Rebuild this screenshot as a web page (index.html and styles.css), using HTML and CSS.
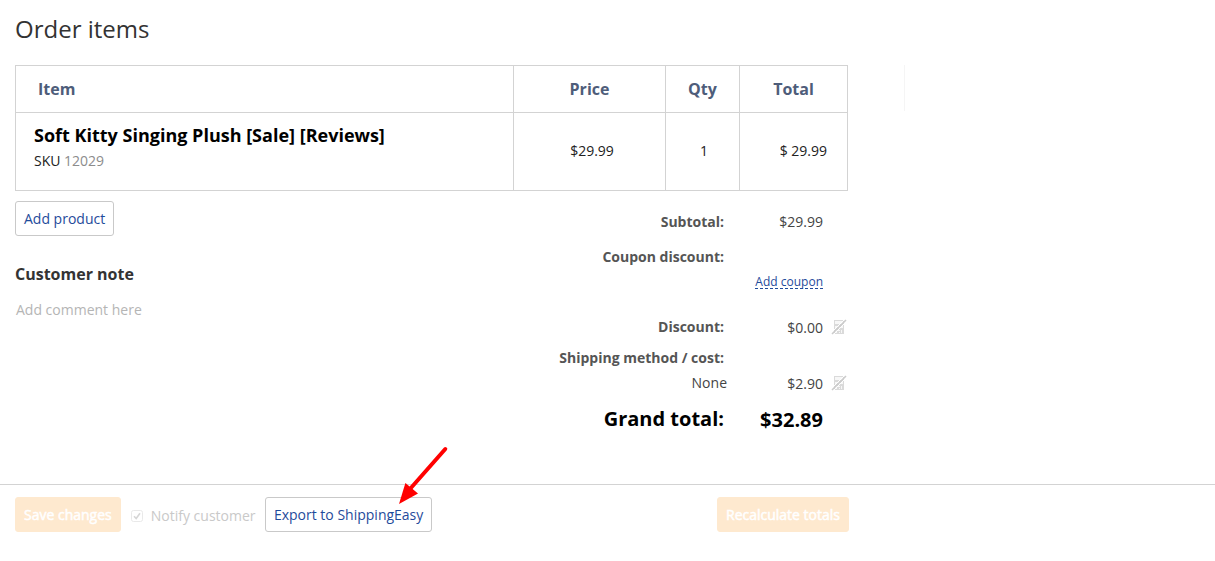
FILE: index.html
```html
<!DOCTYPE html>
<html lang="en">
<head>
<meta charset="utf-8">
<title>Order items</title>
<link rel="stylesheet" href="styles.css">
</head>
<body>
<main class="order">
  <h1 class="title">Order items</h1>
  <div class="items-row">
    <table class="items">
      <colgroup><col class="col-item"><col class="col-price"><col class="col-qty"><col class="col-total"></colgroup>
      <thead>
        <tr><th class="item-head">Item</th><th>Price</th><th>Qty</th><th>Total</th></tr>
      </thead>
      <tbody>
        <tr>
          <td class="item-cell">
            <div class="product">Soft Kitty Singing Plush [Sale] [Reviews]</div>
            <div class="sku">SKU <span class="sku-value">12029</span></div>
          </td>
          <td class="price-cell">$29.99</td>
          <td class="qty-cell">1</td>
          <td class="total-cell">$ 29.99</td>
        </tr>
      </tbody>
    </table>
    <div class="side-edge"></div>
  </div>
  <div class="details">
    <section class="notes">
      <button class="button">Add product</button>
      <h2 class="note-title">Customer note</h2>
      <p class="note-text">Add comment here</p>
    </section>
    <section class="totals">
      <span class="label">Subtotal:</span><span class="value">$29.99</span><span></span>
      <span class="label">Coupon discount:</span><span></span><span></span>
      <span></span><a class="coupon">Add coupon</a><span></span>
      <span class="label">Discount:</span><span class="value low">$0.00</span>
      <svg class="calc" width="16" height="16" viewBox="0 0 16 16"><use href="#calc-off"/></svg>
      <span class="label">Shipping method / cost:</span><span></span><span></span>
      <span class="method">None</span><span class="value low">$2.90</span>
      <svg class="calc" width="16" height="16" viewBox="0 0 16 16"><use href="#calc-off"/></svg>
      <span class="label grand">Grand total:</span><span class="value low grand grand-value">$32.89</span><span></span>
    </section>
  </div>
</main>
<footer class="actions">
  <button class="button primary">Save changes</button>
  <label class="notify">
    <svg class="check" width="12" height="12" viewBox="0 0 12 12"><rect x=".5" y=".5" width="11" height="11" rx="2" fill="#fff" stroke="#e9e9e9"/><path d="M3 6.2 5.2 8.5 9 3.2" fill="none" stroke="#d6d6d6" stroke-width="1.6"/></svg>
    <span>Notify customer</span>
  </label>
  <button class="button export">Export to ShippingEasy</button>
  <button class="button primary recalc">Recalculate totals</button>
</footer>
<svg class="arrow" width="60" height="66" viewBox="0 0 60 66"><path d="M55.3 9 20 49" stroke="#f00" stroke-width="4" stroke-linecap="round"/><path d="M9 64 15.4 43 28 53.5Z" fill="#f00"/></svg>
<svg width="0" height="0" class="defs">
  <symbol id="calc-off" viewBox="0 0 16 16">
    <path d="M3 1h10v14H3z" fill="#dadada"/>
    <path d="M4 2h8v3H4zM4 7h2v2H4zM7 7h2v2H7zM7 11h2v1H7zM10 7h2v2h-2zM10 11h1v3h-1zM4 11h2v3H4zM8 13h1v1H8z" fill="#f7f7f7"/>
    <path d="M0 14 14 0M2 16 16 2" stroke="#fff"/>
    <path d="M1 15 15 1" stroke="#cbcbcb" stroke-width="1.6"/>
  </symbol>
</svg>
</body>
</html>
```

FILE: styles.css
```css
* { box-sizing: border-box; }
body {
  margin: 0;
  height: 561px;
  overflow: hidden;
  background: #fff;
  color: #222;
  font: 14px/20px "Open Sans", sans-serif;
  display: flex;
  flex-direction: column;
}
.order { height: 484px; padding: 0 0 0 15px; }
.title { margin: 0; height: 65px; padding-top: 13px; font-size: 24px; line-height: 32px; font-weight: 400; color: #333; }
.items-row { display: flex; gap: 56px; }
.side-edge { width: 1px; height: 46px; background: #f5f5f5; }
.items { width: 833px; table-layout: fixed; border-collapse: collapse; }
.items th, .items td { border: 1px solid #d3d3d3; padding: 0; }
.col-item { width: 498px; }
.col-price { width: 152px; }
.col-qty { width: 74px; }
.col-total { width: 108px; }
.items th { height: 47px; font-size: 16px; font-weight: 700; color: #4e5d7a; }
.items .item-head { text-align: left; padding-left: 22px; }
.items td { height: 78px; font-size: 14px; padding-bottom: 2px; }
.items .item-cell { vertical-align: top; padding: 11px 0 0 18px; }
.product { font-size: 18px; line-height: 22px; font-weight: 700; color: #000; }
.sku { margin-top: 5px; line-height: 20px; }
.sku-value { color: #8c8c8c; }
.items .price-cell { text-align: center; padding-left: 5px; }
.items .qty-cell { text-align: center; padding-left: 3px; }
.items .total-cell { text-align: right; padding-right: 20px; }
.details { display: flex; justify-content: space-between; width: 833px; }
.notes { padding-top: 10px; }
.button {
  display: block;
  height: 35px;
  padding: 0 8px;
  border: 1px solid #c9c9c9;
  border-radius: 3px;
  background: #fff;
  color: #1f4b9b;
  font: 14px/20px "Open Sans", sans-serif;
  white-space: nowrap;
}
.note-title { margin: 27px 0 0; font-size: 16px; line-height: 22px; font-weight: 700; color: #333; }
.note-text { margin: 15px 0 0 1px; color: #b5b5b5; }
.totals {
  display: grid;
  grid-template-columns: 170px 99px 24px;
  grid-template-rows: 35px 25px 45px 31px 25px 36px 30px;
  padding: 21px 1px 0 0;
  color: #444;
  justify-items: end;
  align-items: start;
}
.label { font-weight: 700; color: #555; white-space: nowrap; }
.low { padding-top: 1px; }
.calc { margin-top: 2px; }
.method { margin-right: -3px; }
.coupon { margin-top: 3px; font-size: 12px; line-height: 13px; color: #1f4b9b; border-bottom: 1px dashed #1f4b9b; }
.grand { font-size: 20px; color: #000; }
.grand-value { font-weight: 700; }
.actions {
  display: flex;
  align-items: flex-start;
  height: 77px;
  padding: 12px 366px 0 15px;
  border-top: 1px solid #d3d3d3;
}
.primary { background: #fee9cf; border-color: #fee9cf; color: #fff; -webkit-text-stroke: 0.5px #fff; }
.notify { display: flex; align-items: center; gap: 8px; height: 38px; margin-left: 10px; color: #c9c9c9; }
.export { margin-left: 9.4px; }
.recalc { margin-left: auto; }
.arrow { position: absolute; left: 390px; top: 440px; }
.defs { position: absolute; }
```
